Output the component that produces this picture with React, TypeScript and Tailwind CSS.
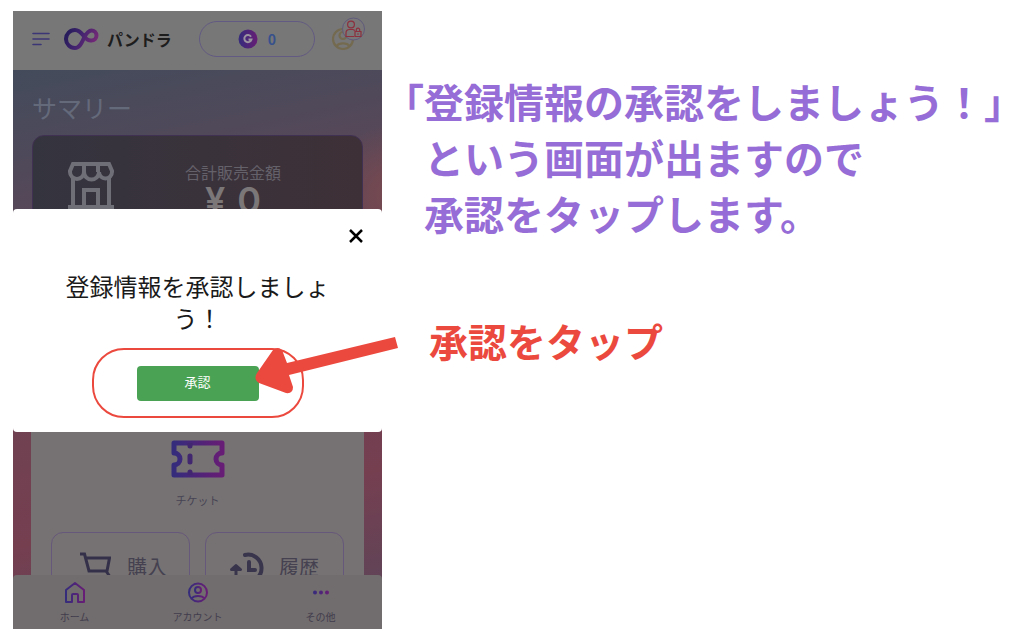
import { useState } from "react";

function Gradients() {
  return (
    <svg className="absolute size-0" aria-hidden="true">
      <defs>
        <linearGradient id="brand" x1="0" y1="0" x2="1" y2="0">
          <stop offset="0" stopColor="#352c7c" />
          <stop offset="1" stopColor="#671d75" />
        </linearGradient>
        <linearGradient id="loop" gradientUnits="userSpaceOnUse" x1="2" y1="3" x2="33" y2="18">
          <stop offset="0" stopColor="#221a58" />
          <stop offset="0.45" stopColor="#42246f" />
          <stop offset="1" stopColor="#7d2a78" />
        </linearGradient>
      </defs>
    </svg>
  );
}

function Header() {
  return (
    <header className="flex h-[59px] items-center bg-[#787777] pr-[17px] pb-[3px] pl-[19px]">
      <button aria-label="メニュー">
        <svg width="18" height="14" viewBox="0 0 18 14" stroke="#3b3676" strokeWidth="1.6" strokeLinecap="round">
          <path d="M1 1.5h16M1 7h16M1 12.5h8" />
        </svg>
      </button>
      <a href="#" className="ml-[14px] flex items-center gap-2 text-[16px] font-bold text-[#1d1d1d]">
        <svg width="35" height="24" viewBox="0 0 35 24" fill="none" stroke="url(#loop)" strokeWidth="4">
          <path d="M11 21A9 9 0 1 1 11 3C16 3 18 7 21 10.500S25.500 13.500 27.500 13.500A5 5 0 0 0 27.500 3.500C24 3.500 22 7 20 11S16 21 11 21Z" />
        </svg>
        パンドラ
      </a>
      <button className="ml-[27px] flex h-[36px] w-[116px] items-center justify-center gap-[10px] rounded-full border border-[#625a82] text-[14px] font-bold text-[#36518c]">
        <svg width="20" height="20" viewBox="0 0 20 20">
          <circle cx="10" cy="10" r="9.500" fill="url(#brand)" />
          <path d="M13 7.700A3.600 3.600 0 1 0 13.400 10.600H10.500" fill="none" stroke="#9a93a0" strokeWidth="2" />
        </svg>
        0
      </button>
      <button aria-label="プロフィール" className="ml-auto">
        <svg width="35" height="44" viewBox="0 0 35 44" fill="none">
          <g stroke="#746a50" strokeWidth="2.200">
            <circle cx="13" cy="22" r="10" />
            <circle cx="13" cy="18.500" r="3.500" />
            <path d="M6.500 29C9 25.500 17 25.500 19.500 29" />
          </g>
          <circle cx="23.500" cy="12" r="11" fill="#797777" stroke="#5f5a7c" />
          <g stroke="#8d2f3d" strokeWidth="1.200">
            <circle cx="21" cy="7.500" r="3.400" />
            <path d="M24 19.500H16V16Q16 12.500 19.500 12.500H23L25 13.500M25 14.500H31V19.500H25ZM26.300 14.500V12.800A1.700 1.700 0 0 1 29.700 12.800V14.500M28 16.300V17.700" />
          </g>
        </svg>
      </button>
    </header>
  );
}

function Summary() {
  return (
    <section className="px-[19px] pt-[20px]">
      <h2 className="text-[25px] leading-[34px] text-[#656a7b]">サマリー</h2>
      <div className="mt-[11px] flex h-[150px] items-start rounded-xl border border-[#403052] bg-linear-to-r from-[#34343f] to-[#3e3037] pt-[26px] pl-[35px]">
        <svg width="46" height="48" viewBox="0 0 46 48" fill="none" stroke="#6f6f78" strokeWidth="4">
          <path d="M5 2H41L44 9V10A6 6 0 0 1 31 10A7 7 0 0 1 16 10A7 7 0 0 1 2 10V9ZM16 2V10M30 2V10" />
          <path d="M5 15V45M41 15V45M0 45H46M16 45V28H30V45" />
        </svg>
        <div className="ml-[69px] flex w-[100px] flex-col items-center text-[#65616a]">
          <span className="text-[16px] leading-[20px]">合計販売金額</span>
          <span className="flex gap-3 font-[Inter,sans-serif] text-[36px] leading-[36px] font-semibold text-[#7b7779]">
            <span>¥</span>
            <span>0</span>
          </span>
        </div>
      </div>
    </section>
  );
}

function TicketPanel() {
  return (
    <section className="mx-[18px] flex h-[300px] flex-col items-center bg-[#767273] px-[20px] pt-[155px]">
      <a href="#" className="flex flex-col items-center gap-[14px] text-[11px] leading-[16px] text-[#464353]">
        <svg width="54" height="38" viewBox="0 0 54 38" fill="none" stroke="url(#brand)" strokeWidth="5" strokeLinejoin="round">
          <path d="M3 3H51V13A6 6 0 0 0 51 25V35H3V25A6 6 0 0 0 3 13Z" />
          <path d="M16.500 3C17.500 3 20.500 3 21.500 3V6A2.500 2.500 0 0 1 16.500 6ZM16.500 35V32A2.500 2.500 0 0 1 21.500 32V35ZM16.500 16A2.500 2.500 0 0 1 21.500 16V22A2.500 2.500 0 0 1 16.500 22Z" fill="#40276f" stroke="none" />
        </svg>
        チケット
      </a>
      <div className="mt-[24px] grid w-full grid-cols-2 gap-[15px] text-[20px] text-[#454150]">
        <button className="flex h-[70px] items-center justify-center gap-4 rounded-xl border border-[#66587a] pl-[6px]">
          <svg width="31" height="30" viewBox="0 0 31 30" fill="none" stroke="#34304a" strokeWidth="3">
            <path d="M0 2H4.500L9 19H27L29.500 6H6M26 19L29.500 24" />
          </svg>
          購入
        </button>
        <button className="flex h-[70px] items-center justify-center gap-[14px] rounded-xl border border-[#66587a]">
          <svg width="35" height="32" viewBox="0 0 35 32" fill="none" stroke="#39354d" strokeWidth="4">
            <path d="M15 4A13.500 13.500 0 1 1 16 30.500M19 11V19H25" strokeLinecap="round" />
            <path d="M1.500 18.500L6 14.500L10.500 18.500ZM6 18V27" strokeLinejoin="round" strokeWidth="3" fill="#39354d" />
          </svg>
          履歴
        </button>
      </div>
    </section>
  );
}

function BottomNav() {
  return (
    <nav className="absolute inset-x-0 bottom-0 grid h-[54px] grid-cols-3 rounded-t bg-[#716c6e] pt-[6px] text-[10px] leading-[16px] text-[#413d4c]">
      <a href="#" className="flex flex-col items-center gap-[5px]">
        <svg width="22" height="23" viewBox="0 0 22 23" fill="none" stroke="url(#brand)" strokeWidth="2" strokeLinejoin="round">
          <path d="M2 9L11 2L20 9V21H14V14Q14 13 13 13H9Q8 13 8 14V21H2Z" />
        </svg>
        ホーム
      </a>
      <a href="#" className="flex flex-col items-center gap-[5px]">
        <svg width="22" height="23" viewBox="0 0 22 23" fill="none" stroke="url(#brand)" strokeWidth="2">
          <circle cx="11" cy="11.500" r="9" />
          <circle cx="11" cy="9" r="3" />
          <path d="M4.500 17.500C7 14 15 14 17.500 17.500" />
        </svg>
        アカウント
      </a>
      <a href="#" className="flex flex-col items-center gap-[5px]">
        <svg width="22" height="23" viewBox="0 0 22 23" fill="url(#brand)">
          <path d="M3 11.500a2 2 0 1 0 4 0a2 2 0 1 0-4 0M9 11.500a2 2 0 1 0 4 0a2 2 0 1 0-4 0M15 11.500a2 2 0 1 0 4 0a2 2 0 1 0-4 0" />
        </svg>
        その他
      </a>
    </nav>
  );
}

function ApproveModal(props: { onClose: () => void }) {
  return (
    <div role="dialog" aria-labelledby="approve-title" className="absolute inset-x-0 top-[198px] flex h-[223px] flex-col items-center rounded bg-white">
      <button aria-label="閉じる" className="mt-[20px] mr-[19px] self-end" onClick={props.onClose}>
        <svg width="14" height="14" viewBox="0 0 14 14" stroke="#000" strokeWidth="2.500">
          <path d="M1 1L13 13M13 1L1 13" />
        </svg>
      </button>
      <p id="approve-title" className="mt-[27px] px-[50px] text-center text-[24px] leading-[32px] text-[#1a1a1a]">
        登録情報を承認しましょう！
      </p>
      {/* red ring around the button */}
      <div className="mt-[14px] flex h-[70px] w-[212px] items-center justify-center rounded-[32px] border-2 border-[#ec493e]">
        <button className="h-[35px] w-[122px] rounded bg-[#4aa354] pb-[2px] text-[13px] text-white" onClick={props.onClose}>
          承認
        </button>
      </div>
    </div>
  );
}

export default function App() {
  const [showModal, setShowModal] = useState(true);

  return (
    <main
      lang="ja"
      className="flex items-start overflow-hidden bg-white pt-[11px] pb-3 pl-[13px] font-['Noto_Sans_CJK_JP',sans-serif]"
    >
      <Gradients />
      <div className="relative w-[369px] shrink-0">
        <div className="relative overflow-hidden">
          <Header />
          <div className="h-[559px] overflow-hidden bg-[radial-gradient(circle_at_104%_22%,#7a4a50_0,transparent_12%),linear-gradient(168deg,#434b5b_0%,#50495a_16%,#5e4656_30%,#6f4252_52%,#753f50_75%,#5f4458_94%)]">
            <Summary />
            <TicketPanel />
          </div>
          <BottomNav />
        </div>
        {showModal ? <ApproveModal onClose={() => setShowModal(false)} /> : <></>}
        <svg className="absolute top-[325px] left-[240px]" width="146" height="64" viewBox="0 0 146 64" fill="#ec493e" aria-hidden="true">
          <path d="M4 37L20 14Q25 10 29 14L34 27L142 1L145 12L36 39L40 51Q40 58 33 57L6 47Q0 43 4 37Z" />
        </svg>
      </div>

      <div className="pt-[62px] pl-[2px] font-bold whitespace-nowrap">
        <div className="text-[40px] leading-[56px] text-[#966cd6]">
          <p>「登録情報の承認をしましょう！」</p>
          <div className="pl-[40px]">
            <p>という画面が出ますので</p>
            <p>承認をタップします。</p>
          </div>
        </div>
        <p className="mt-[71px] pl-[45px] text-[39px] leading-[56px] text-[#ec493e]">承認をタップ</p>
      </div>
    </main>
  );
}
